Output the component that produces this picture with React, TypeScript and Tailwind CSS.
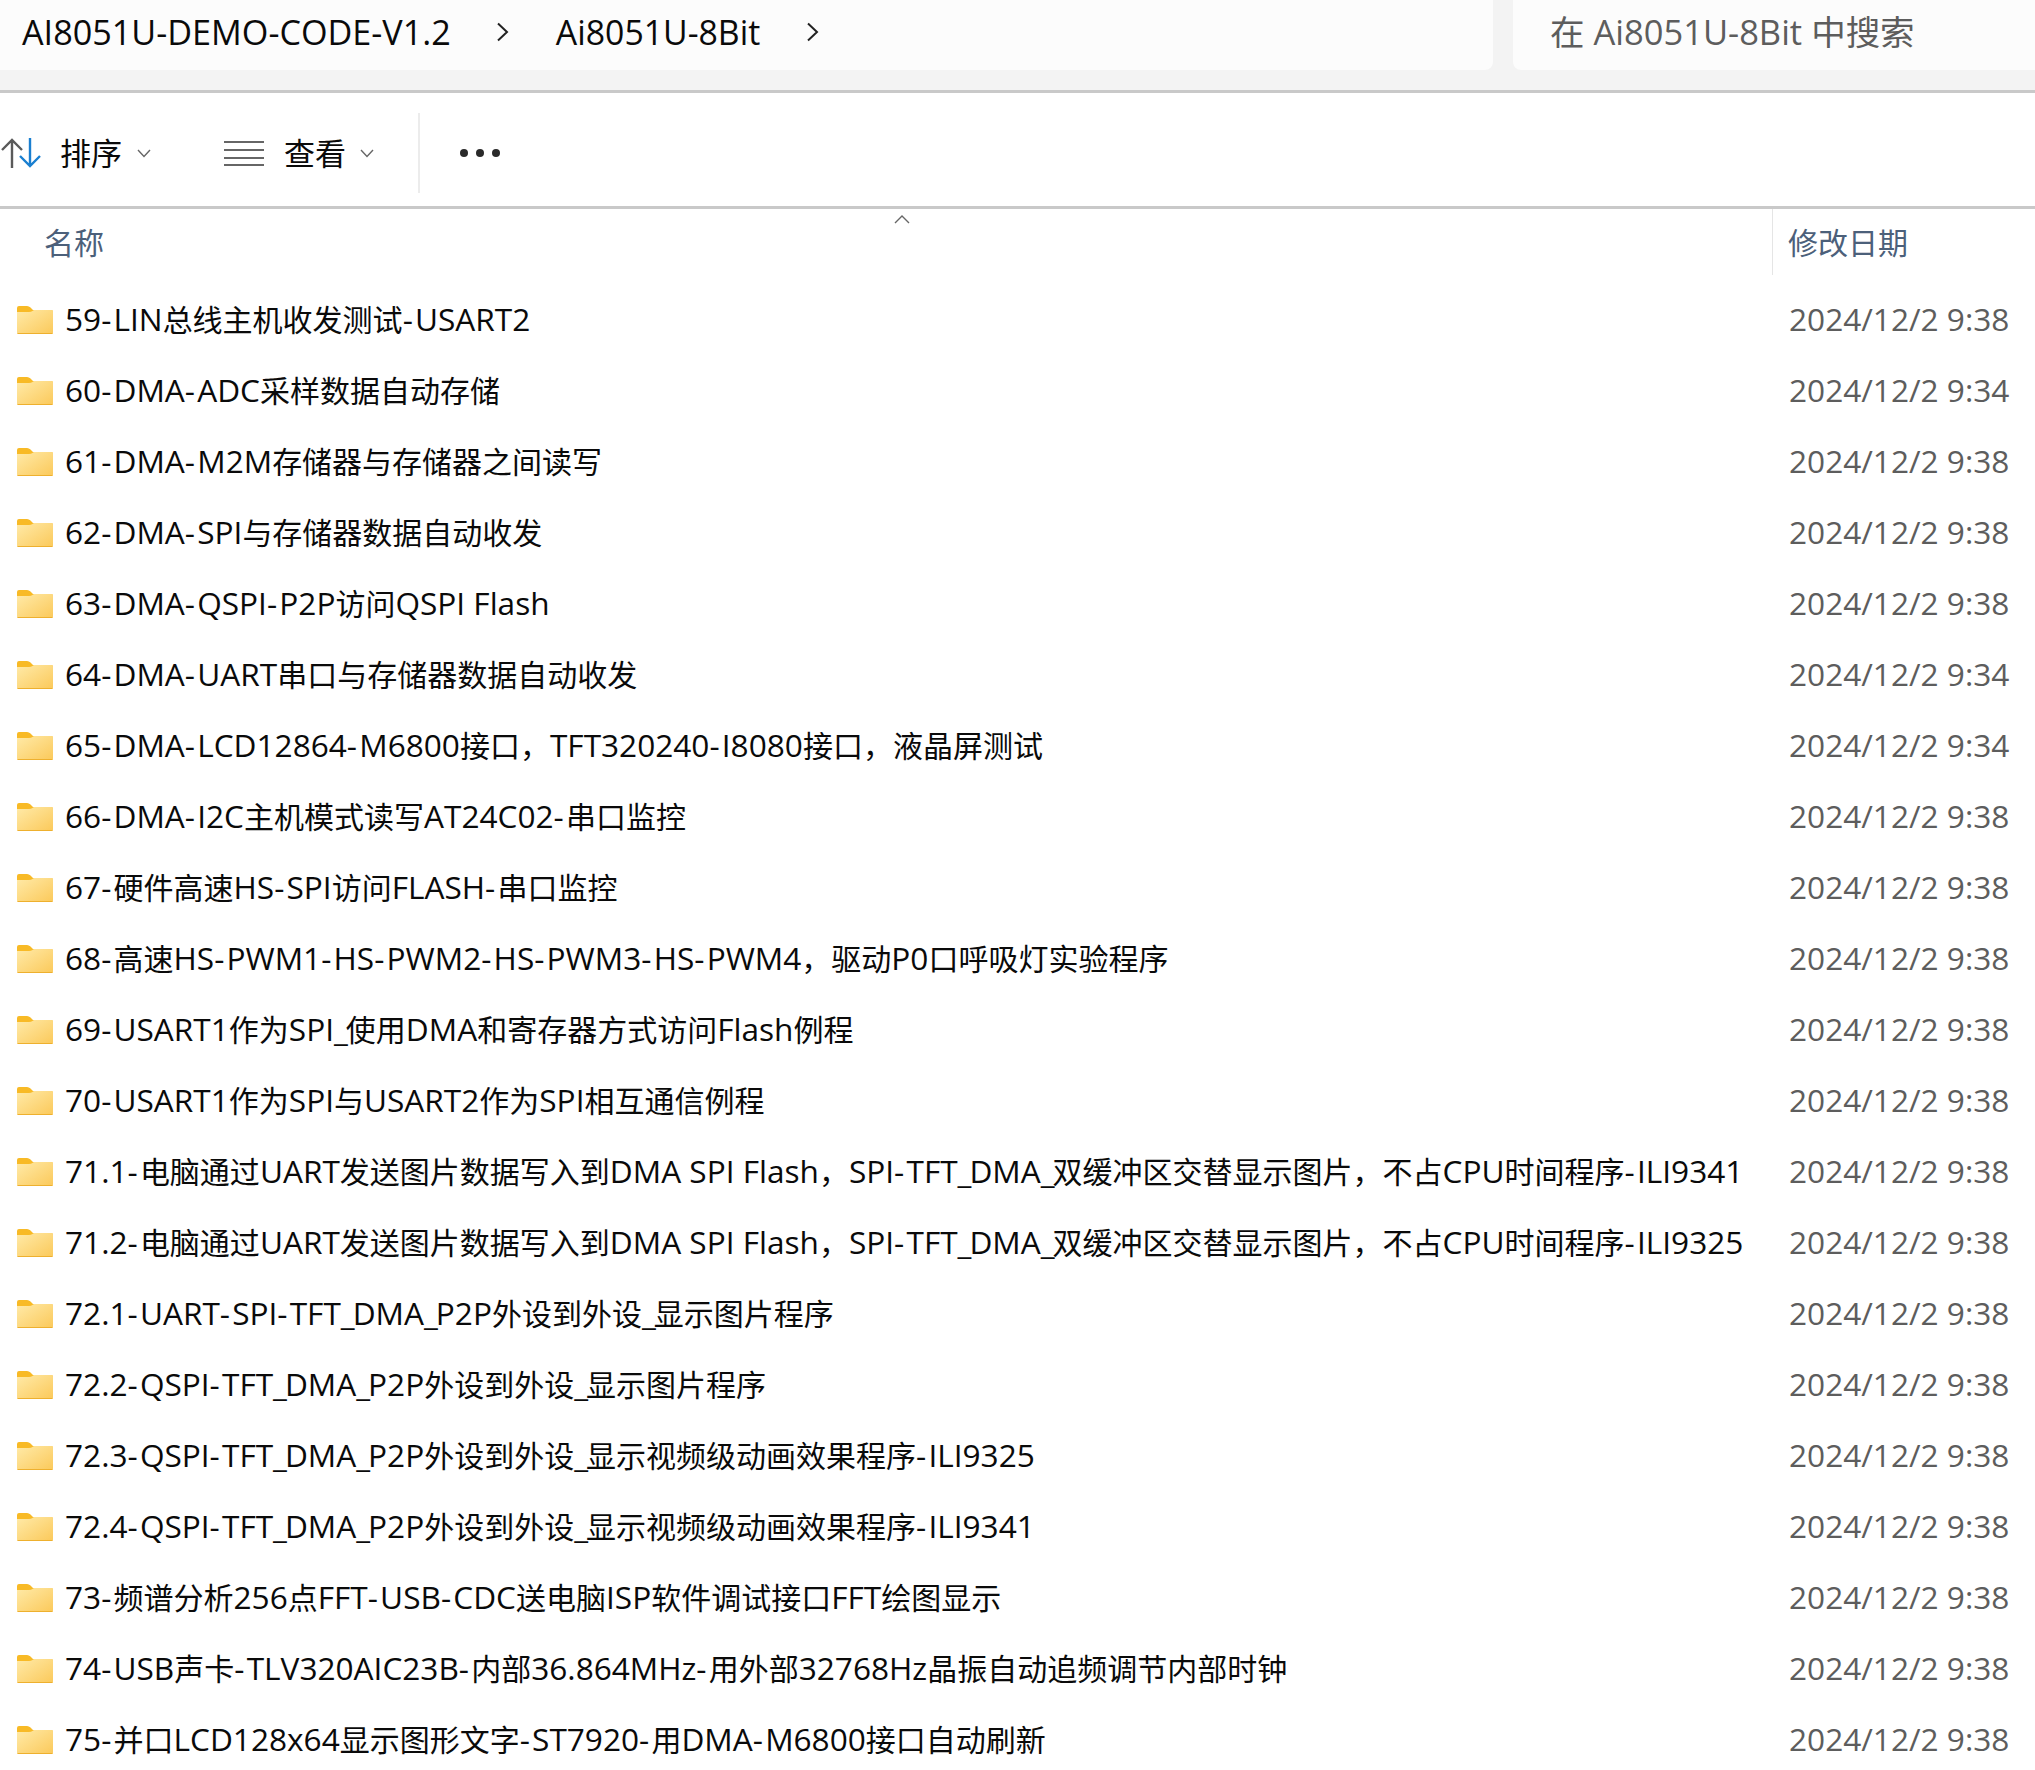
import { Fragment } from "react";

const names = [
  "59-LIN总线主机收发测试-USART2",
  "60-DMA-ADC采样数据自动存储",
  "61-DMA-M2M存储器与存储器之间读写",
  "62-DMA-SPI与存储器数据自动收发",
  "63-DMA-QSPI-P2P访问QSPI Flash",
  "64-DMA-UART串口与存储器数据自动收发",
  "65-DMA-LCD12864-M6800接口，TFT320240-I8080接口，液晶屏测试",
  "66-DMA-I2C主机模式读写AT24C02-串口监控",
  "67-硬件高速HS-SPI访问FLASH-串口监控",
  "68-高速HS-PWM1-HS-PWM2-HS-PWM3-HS-PWM4，驱动P0口呼吸灯实验程序",
  "69-USART1作为SPI_使用DMA和寄存器方式访问Flash例程",
  "70-USART1作为SPI与USART2作为SPI相互通信例程",
  "71.1-电脑通过UART发送图片数据写入到DMA SPI Flash，SPI-TFT_DMA_双缓冲区交替显示图片，不占CPU时间程序-ILI9341",
  "71.2-电脑通过UART发送图片数据写入到DMA SPI Flash，SPI-TFT_DMA_双缓冲区交替显示图片，不占CPU时间程序-ILI9325",
  "72.1-UART-SPI-TFT_DMA_P2P外设到外设_显示图片程序",
  "72.2-QSPI-TFT_DMA_P2P外设到外设_显示图片程序",
  "72.3-QSPI-TFT_DMA_P2P外设到外设_显示视频级动画效果程序-ILI9325",
  "72.4-QSPI-TFT_DMA_P2P外设到外设_显示视频级动画效果程序-ILI9341",
  "73-频谱分析256点FFT-USB-CDC送电脑ISP软件调试接口FFT绘图显示",
  "74-USB声卡-TLV320AIC23B-内部36.864MHz-用外部32768Hz晶振自动追频调节内部时钟",
  "75-并口LCD128x64显示图形文字-ST7920-用DMA-M6800接口自动刷新",
];
const times = ["9:38","9:34","9:38","9:38","9:38","9:34","9:34","9:38","9:38","9:38","9:38","9:38","9:38","9:38","9:38","9:38","9:38","9:38","9:38","9:38","9:38"];

function Mixed({ text }: { text: string }) {
  const parts = text.split(/([\u3000-\u9fff\uff00-\uffef]+|-|_)/);
  return (
    <>
      {parts.map((p, i) => {
        if (p === "-") return <span key={i} className="tracking-[2.2px]">-</span>;
        if (p === "_") return <span key={i} className="tracking-[-2px]">_</span>;
        if (i % 2 === 1) return <span key={i} className="text-[30px]">{p}</span>;
        return <Fragment key={i}>{p}</Fragment>;
      })}
    </>
  );
}

function Folder({ id }: { id: number }) {
  const g = `fg${id}`;
  return (
    <svg width="36" height="28" viewBox="0 0 36 28" className="shrink-0">
      <defs>
        <linearGradient id={g} x1="0" y1="0" x2="1" y2="1">
          <stop offset="0" stopColor="#ffeaa8" />
          <stop offset="1" stopColor="#fbc95a" />
        </linearGradient>
      </defs>
      <path d="M0 2 A2 2 0 0 1 2 0 H10 Q12 0 13.5 1.5 L16 4 H34.5 A1.5 1.5 0 0 1 36 5.5 V10 H0Z" fill="#f8ba26" />
      <path d="M0 6 H12 Q14 6 15.5 5 L17 4 H34.5 A1.5 1.5 0 0 1 36 5.5 V26.5 A1.5 1.5 0 0 1 34.5 28 H1.5 A1.5 1.5 0 0 1 0 26.5Z" fill={`url(#${g})`} />
      <rect x="0.5" y="27" width="35" height="1" fill="#eeb02e" />
    </svg>
  );
}

function Chev() {
  return (
    <svg width="14" height="9" viewBox="0 0 14 9" className="shrink-0">
      <path d="M1 1 L7 7.5 L13 1" fill="none" stroke="#666" strokeWidth="1.4" />
    </svg>
  );
}

function Crumb() {
  return (
    <svg width="13" height="20" viewBox="0 0 13 20" className="shrink-0">
      <path d="M2 1.5 L11 10 L2 18.5" fill="none" stroke="#222" strokeWidth="2" />
    </svg>
  );
}

export default function App() {
  return (
    <div className="h-[1770px] w-[2035px] overflow-hidden bg-white text-[31.6px] text-[#0a0a0a] font-['Open_Sans','Noto_Sans_CJK_SC',sans-serif]">
      <div className="flex h-[90px] gap-5 bg-[#f3f3f3] pb-5">
        <div className="flex w-[1493px] items-center rounded-br-lg bg-[#fcfcfc] pb-[6px] pl-[22px] text-[34.2px]">
          <span>AI8051U-DEMO-CODE-V1.2</span>
          <span className="ml-[45px]"><Crumb /></span>
          <span className="ml-[47px] text-[33.8px]">Ai8051U-8Bit</span>
          <span className="ml-[46px]"><Crumb /></span>
        </div>
        <div className="flex flex-1 items-center rounded-bl-lg bg-[#fcfcfc] pb-[6px] pl-[37px] text-[34.5px] text-[#5d5d5d]">在 Ai8051U-8Bit 中搜索</div>
      </div>
      <div className="flex h-[119px] items-center border-y-[3px] border-[#c9c9c9] pt-[7px] text-[31px]">
        <svg width="42" height="30" viewBox="0 0 42 30" className="shrink-0">
          <path d="M12 30 V2 M2 12 L12 2 L22 12" fill="none" stroke="#5a5a5a" strokeWidth="2.4" />
          <path d="M30 0 V28 M20 18 L30 28 L40 18" fill="none" stroke="#1a7fd0" strokeWidth="2.4" />
        </svg>
        <span className="ml-[18px]">排序</span>
        <span className="ml-[15px]"><Chev /></span>
        <svg width="40" height="26" viewBox="0 0 40 26" className="ml-[73px] shrink-0">
          <path d="M0 2 H40 M0 10 H40 M0 18 H40 M0 25 H40" stroke="#666" strokeWidth="2" />
        </svg>
        <span className="ml-5">查看</span>
        <span className="ml-[14px]"><Chev /></span>
        <div className="ml-11 h-20 w-0.5 bg-[#ececec]"></div>
        <div className="ml-10 flex gap-2">
          <span className="size-2 rounded-full bg-[#2a2a2a]"></span>
          <span className="size-2 rounded-full bg-[#2a2a2a]"></span>
          <span className="size-2 rounded-full bg-[#2a2a2a]"></span>
        </div>
      </div>
      <div className="relative flex h-[66px] items-center text-[30px] text-[#4c607a]">
        <span className="ml-11 flex-1">名称</span>
        <svg width="16" height="9" viewBox="0 0 16 9" className="absolute left-[894px] top-[6px]">
          <path d="M1 8 L8 1 L15 8" fill="none" stroke="#666" strokeWidth="1.4" />
        </svg>
        <div className="flex h-full w-[263px] items-center border-l border-[#e5e5e5] pl-[15px]">修改日期</div>
      </div>
      <div className="mt-[9px] flex flex-col">
        {names.map((n, i) => (
          <div key={n} className="flex h-[71px] items-center pl-[17px]">
            <Folder id={i} />
            <span className="ml-3 flex-1 whitespace-nowrap pb-0.5"><Mixed text={n} /></span>
            <span className="w-[246px] whitespace-nowrap pb-0.5 text-[#5d5d5d]">2024/12/2 {times[i]}</span>
          </div>
        ))}
      </div>
    </div>
  );
}
